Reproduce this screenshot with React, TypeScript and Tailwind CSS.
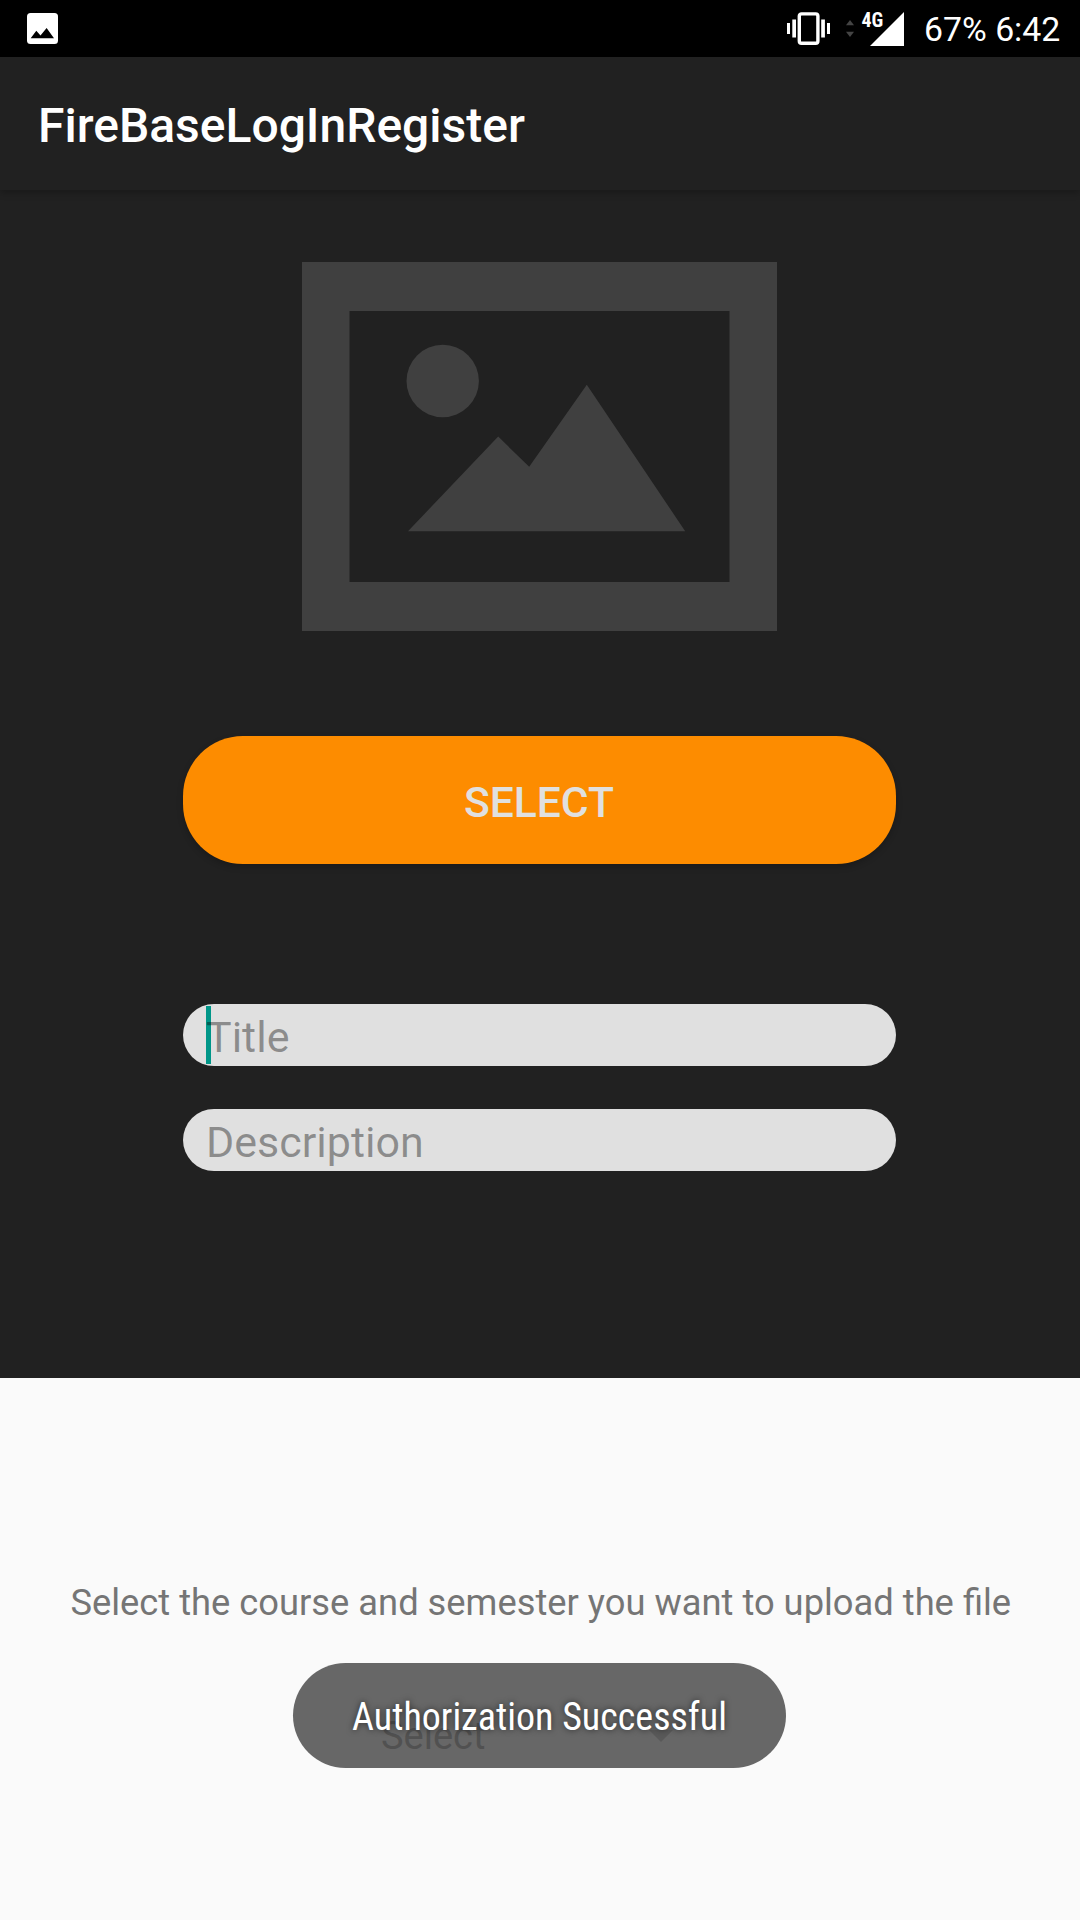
function ImageNotificationIcon() {
  return (
    <svg className="ml-[27px] h-[31px] w-[31px]" viewBox="0 0 31 31">
      <rect width="31" height="31" rx="3.5" fill="#fff" />
      <path d="M3.7 25.2 9.3 17.8 13.5 22.6 19.6 15 27 25.2Z" fill="#000" />
    </svg>
  );
}

function VibrateIcon() {
  return (
    <svg className="h-[33px] w-[43px]" viewBox="0 0 43 33" fill="#fff">
      <rect x="12.3" y="1.9" width="18.6" height="29.4" rx="2.2" fill="none" stroke="#fff" strokeWidth="3.4" />
      <rect x="0" y="11" width="3" height="11" />
      <rect x="5.3" y="7.5" width="3.7" height="18" />
      <rect x="34.2" y="7.5" width="3.7" height="18" />
      <rect x="40" y="11" width="3" height="11" />
    </svg>
  );
}

function DataArrowsIcon() {
  return (
    <svg className="ml-4 h-[17px] w-2" viewBox="0 0 8 17" fill="#444">
      <path d="M4 0 8 5.2H0Z" />
      <path d="M4 17 0 11.8H8Z" />
    </svg>
  );
}

function SignalIcon() {
  return (
    <div className="relative ml-2 h-[34px] w-[42px]">
      <svg className="ml-2 h-[34px] w-[34px]" viewBox="0 0 34 34">
        <path d="M34 0V34H0Z" fill="#fff" />
      </svg>
      <span className="absolute top-[-4px] left-[-0.5px] font-['Roboto_Condensed'] text-[20px] leading-6 font-bold">4G</span>
    </div>
  );
}

function StatusBar() {
  return (
    <header className="flex h-[57px] items-center justify-between bg-black text-white">
      <ImageNotificationIcon />
      <div className="flex w-[293px] items-center">
        <VibrateIcon />
        <DataArrowsIcon />
        <SignalIcon />
        <span className="ml-5 pt-0.5 text-[33.8px] leading-10 whitespace-nowrap">67% 6:42</span>
      </div>
    </header>
  );
}

function PlaceholderPicture() {
  return (
    <svg className="h-[369px] w-[475px]" viewBox="0 0 475 369" fill="#404040">
      <path fillRule="evenodd" d="M0 0H475V369H0ZM47.5 49V320H427.5V49Z" />
      <circle cx="140.7" cy="119" r="36.2" />
      <path d="M106 269.2 196.2 174.6 227.2 204.8 284.8 122.8 383.2 269.2Z" />
    </svg>
  );
}

function Field({ hint, focused = false }: { hint: string; focused?: boolean }) {
  return (
    <div className="relative flex h-[62px] w-[713px] items-center rounded-[31px] bg-[#e0e0e0] pt-1 pl-[23px]">
      {focused && <span className="absolute top-0.5 left-[23px] h-[58px] w-[5px] bg-[#009688]" />}
      <span className="relative text-[43px] leading-[50px] text-black/38">{hint}</span>
    </div>
  );
}

export default function App() {
  return (
    <div className="relative flex h-[1920px] w-[1080px] flex-col overflow-hidden bg-[#fafafa] font-[Roboto,sans-serif]">
      <StatusBar />
      <div className="relative flex h-[133px] items-center bg-[#212121] pt-1 pl-[38px] shadow-[0_3px_7px_rgba(0,0,0,0.24)]">
        <h1 className="text-[48px] leading-[57px] font-medium text-white">FireBaseLogInRegister</h1>
      </div>

      <main className="flex h-[1188px] flex-col items-center bg-[#212121] pt-[72px] pr-px">
        <PlaceholderPicture />
        <button className="mt-[105px] flex h-32 w-[713px] items-center justify-center rounded-[60px] bg-[#fd8c00] pt-1 pr-px text-[42.6px] leading-[50px] font-medium text-[#e0e0e0] shadow-[0_3px_6px_rgba(0,0,0,0.22)]">
          SELECT
        </button>
        <div className="mt-[140px] flex flex-col gap-[43px]">
          <Field hint="Title" focused />
          <Field hint="Description" />
        </div>
      </main>

      <section className="flex flex-col pt-[204px]">
        <p className="pl-[70.5px] text-[36.3px] leading-[42px] whitespace-nowrap text-[#757575]">
          Select the course and semester you want to upload the file
        </p>
        <div className="mt-[90px] ml-[381px] flex w-[292px] items-center justify-between">
          <span className="text-[38px] leading-[44px] text-[#212121]">Select</span>
          <svg className="h-3 w-6" viewBox="0 0 24 12" fill="#757575">
            <path d="M0 0H24L12 12Z" />
          </svg>
        </div>
      </section>

      <div className="absolute top-[1663px] left-[293px] flex h-[105px] w-[493px] items-center justify-center rounded-full bg-[rgba(86,86,86,0.9)] pt-[3px]">
        <span className="font-['Roboto_Condensed'] text-[38px] leading-[44px] whitespace-nowrap text-white [text-shadow:0_0_6px_rgba(0,0,0,0.6)]">
          Authorization Successful
        </span>
      </div>
    </div>
  );
}
